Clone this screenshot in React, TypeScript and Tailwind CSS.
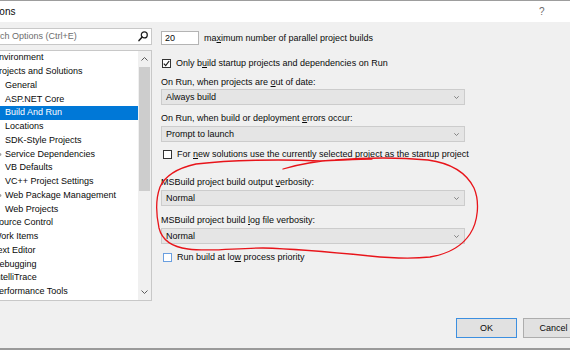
const treeItems = [
  { label: "Environment", level: 0 },
  { label: "Projects and Solutions", level: 0 },
  { label: "General", level: 1 },
  { label: "ASP.NET Core", level: 1 },
  { label: "Build And Run", level: 1, selected: true },
  { label: "Locations", level: 1 },
  { label: "SDK-Style Projects", level: 1 },
  { label: "Service Dependencies", level: 1, expander: true },
  { label: "VB Defaults", level: 1 },
  { label: "VC++ Project Settings", level: 1 },
  { label: "Web Package Management", level: 1, expander: true },
  { label: "Web Projects", level: 1 },
  { label: "Source Control", level: 0 },
  { label: "Work Items", level: 0 },
  { label: "Text Editor", level: 0 },
  { label: "Debugging", level: 0 },
  { label: "IntelliTrace", level: 0 },
  { label: "Performance Tools", level: 0 },
]

function Chevron({ up = false }: { up?: boolean }) {
  return (
    <svg width="7" height="4" viewBox="0 0 7 4" className="shrink-0">
      <path
        d={up ? "M0.5 3.5 L3.5 0.5 L6.5 3.5" : "M0.5 0.5 L3.5 3.5 L6.5 0.5"}
        fill="none"
        stroke="#5a5a5a"
        strokeWidth="1"
      />
    </svg>
  )
}

function Checkbox({ checked = false, hover = false }: { checked?: boolean; hover?: boolean }) {
  return (
    <div
      className={`w-[9px] h-[9px] shrink-0 bg-white border flex items-center justify-center ${
        hover ? "border-[#6a9fe0]" : "border-[#333333]"
      }`}
    >
      {checked && (
        <svg width="7" height="7" viewBox="0 0 7 7">
          <path d="M0.8 3.6 L2.7 5.6 L6.2 1" fill="none" stroke="#1b1b1b" strokeWidth="1.2" />
        </svg>
      )}
    </div>
  )
}

function Dropdown({ value }: { value: string }) {
  return (
    <div className="h-[16px] w-[304px] bg-[#e5e5e5] border border-[#cccccc] flex items-center justify-between pl-[4px] pr-[5px]">
      <span>{value}</span>
      <svg width="5" height="3" viewBox="0 0 5 3">
        <path d="M0.3 0.3 L2.5 2.5 L4.7 0.3" fill="none" stroke="#777" strokeWidth="0.9" />
      </svg>
    </div>
  )
}

function Label({ children, className = "" }: { children: React.ReactNode; className?: string }) {
  return <div className={`h-[14px] flex items-center whitespace-nowrap ${className}`}>{children}</div>
}

export default function App() {
  return (
    <div className="relative w-[570px] h-[350px] overflow-hidden bg-[#f0f0f0] text-[#0a0a0a] text-[9px] leading-none font-['Liberation_Sans',Arial,sans-serif] flex flex-col">
      {/* title bar */}
      <div className="h-[22px] shrink-0 bg-white border-t border-[#9d9d9d] flex items-center">
        <span className="-ml-[19px] text-[10px] w-[522px]">Options</span>
        <span className="ml-[36px] text-[#6b6b6b] text-[10px]">?</span>
      </div>

      <div className="h-[279px] shrink-0 flex">
        {/* left: search + tree */}
        <div className="-ml-[20px] w-[172px] shrink-0 flex flex-col">
          <div className="mt-[6px] h-[17px] bg-white border border-[#c8c8c8] flex items-center justify-between pr-[3px]">
            <span className="ml-[0px] text-[#6d6d6d] whitespace-nowrap">Search Options (Ctrl+E)</span>
            <svg width="10" height="11" viewBox="0 0 10 11">
              <circle cx="6.3" cy="3.9" r="3" fill="none" stroke="#1e1e1e" strokeWidth="1.2" />
              <path d="M4.2 6 L1 9.6" stroke="#1e1e1e" strokeWidth="1.5" strokeLinecap="round" />
            </svg>
          </div>
          <div className="mt-[5px] h-[251px] bg-white border border-[#c8c8c8] flex">
            <div className="flex-1 flex flex-col">
              {treeItems.map((it) => (
                <div
                  key={it.label}
                  className={`h-[13.76px] flex items-center whitespace-nowrap ${
                    it.level === 0 ? "pl-[12px]" : it.expander ? "pl-[16px] gap-[3px]" : "pl-[24px]"
                  } ${it.selected ? "bg-[#0078d7] text-white" : ""}`}
                >
                  {it.expander && (
                    <svg width="5" height="7" viewBox="0 0 5 7">
                      <path d="M0.5 0.5 L4.2 3.5 L0.5 6.5 Z" fill="none" stroke="#6b6b6b" strokeWidth="0.9" />
                    </svg>
                  )}
                  <span>{it.label}</span>
                </div>
              ))}
            </div>
            <div className="w-[13px] shrink-0 bg-[#f0f0f0] flex flex-col">
              <div className="h-[16px] flex items-center justify-center">
                <Chevron up />
              </div>
              <div className="h-[124px] mx-[1px] bg-[#cdcdcd]" />
              <div className="flex-1" />
              <div className="h-[16px] flex items-center justify-center">
                <Chevron />
              </div>
            </div>
          </div>
        </div>

        {/* right: settings */}
        <div className="ml-[9px] w-[304px] shrink-0 flex flex-col">
          <div className="mt-[9px] h-[14px] flex items-center">
            <div className="w-[38px] h-[14px] bg-white border border-[#b4b4b4] flex items-center pl-[3px]">20</div>
            <span className="ml-[5px] whitespace-nowrap">
              ma<u>x</u>imum number of parallel project builds
            </span>
          </div>
          <Label className="mt-[11px] gap-[5px] pl-[1px]">
            <Checkbox checked />
            <span>
              Only b<u>u</u>ild startup projects and dependencies on Run
            </span>
          </Label>
          <Label className="mt-[5px]">
            <span>
              On Run, when projects are <u>o</u>ut of date:
            </span>
          </Label>
          <Dropdown value="Always build" />
          <Label className="mt-[6px]">
            <span>
              On Run, when build or deployment <u>e</u>rrors occur:
            </span>
          </Label>
          <div className="mt-[1px]">
            <Dropdown value="Prompt to launch" />
          </div>
          <Label className="mt-[5px] gap-[5px] pl-[2px]">
            <Checkbox />
            <span>
              For <u>n</u>ew solutions use the currently selected project as the startup project
            </span>
          </Label>
          <Label className="mt-[14px]">
            <span>
              MSBuild project build output <u>v</u>erbosity:
            </span>
          </Label>
          <div className="mt-[1px]">
            <Dropdown value="Normal" />
          </div>
          <Label className="mt-[7px]">
            <span>
              MSBuild project build <u>l</u>og file verbosity:
            </span>
          </Label>
          <div className="mt-[1px]">
            <Dropdown value="Normal" />
          </div>
          <Label className="mt-[6px] gap-[5px] pl-[2px]">
            <Checkbox hover />
            <span>
              Run build at lo<u>w</u> process priority
            </span>
          </Label>
        </div>
      </div>

      {/* buttons */}
      <div className="mt-[17px] h-[20px] shrink-0 flex pl-[456px] gap-[6px]">
        <button className="w-[61px] h-[20px] shrink-0 bg-[#e1e1e1] border border-[#3c8fe0] text-[9px]">OK</button>
        <button className="w-[61px] h-[20px] shrink-0 bg-[#e1e1e1] border border-[#adadad] text-[9px]">Cancel</button>
      </div>
      <div className="flex-1" />
      <div className="h-[2px] shrink-0 bg-[#9a9a9a]" />

      {/* red freehand annotation */}
      <svg
        className="absolute inset-0 pointer-events-none"
        width="570"
        height="350"
        viewBox="0 0 570 350"
      >
        <path
          d="M283 169 C300 164 315 161 335 160 C360 158 395 157 428 160 C450 163 466 172 474 188 C480 202 478 222 470 234 C462 246 448 254 430 257 C410 259 390 258 370 256 C340 253 300 249 263 248 C235 248 210 252 188 249 C172 247 162 240 159 228 C156 214 156 198 160 187 C165 176 178 168 196 164 C230 160 280 159 320 161 C345 160 360 159 372 159"
          fill="none"
          stroke="#e8141a"
          strokeWidth="1.3"
          strokeLinecap="round"
        />
      </svg>
    </div>
  )
}
